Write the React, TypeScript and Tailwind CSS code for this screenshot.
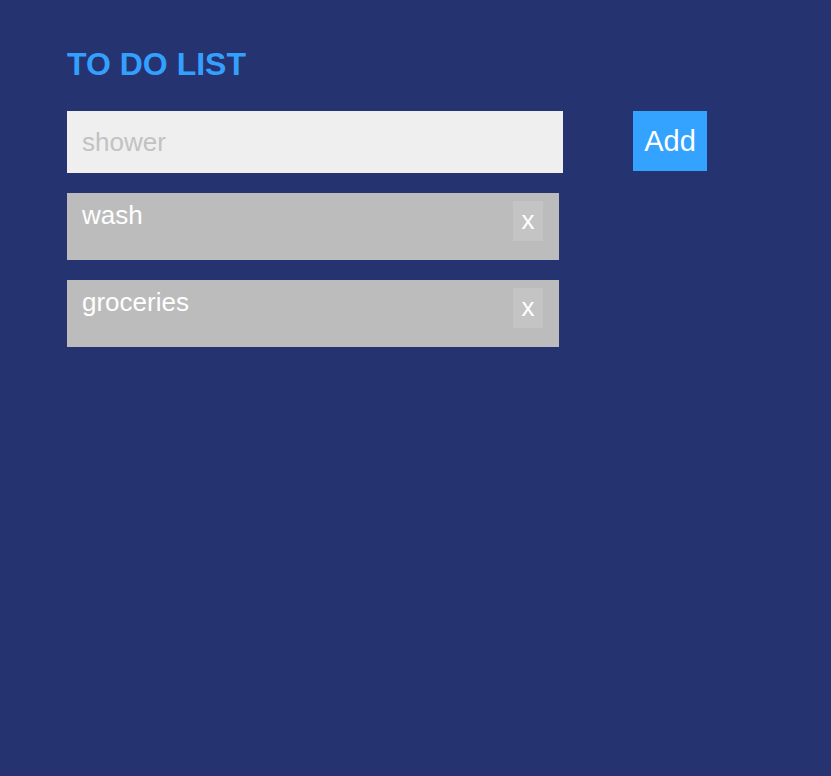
import React from "react";

export default function App() {
  const items = ["wash", "groceries"];
  return (
    <div
      className="min-h-[776px] w-full bg-[#253370] pl-[67px] pt-[44px]"
      style={{ fontFamily: '"Liberation Sans", Arial, sans-serif' }}
    >
      <h1 className="text-[32px] font-bold leading-[40px] text-[#33a0ff]">TO DO LIST</h1>
      <div className="mt-[27px] flex items-start">
        <input
          placeholder="shower"
          className="h-[62px] w-[496px] bg-[#efefef] px-[15px] text-[26px] text-[#333] outline-none placeholder:text-[#c2c2c2]"
        />
        <button className="ml-[70px] h-[60px] w-[74px] bg-[#33a3ff] pt-[2px] text-[29px] text-white">Add</button>
      </div>
      <div className="mt-[20px] flex flex-col gap-[20px]">
        {items.map((t) => (
          <div key={t} className="flex h-[67px] w-[492px] items-start justify-between bg-[#bcbcbc] pl-[15px] pr-[16px]">
            <span className="pt-[7px] text-[26px] leading-[30px] text-white">{t}</span>
            <button className="mt-[8px] flex h-[40px] w-[30px] items-center justify-center bg-[#c4c4c4] pb-[2px] text-[26px] leading-none text-white">
              x
            </button>
          </div>
        ))}
      </div>
    </div>
  );
}
